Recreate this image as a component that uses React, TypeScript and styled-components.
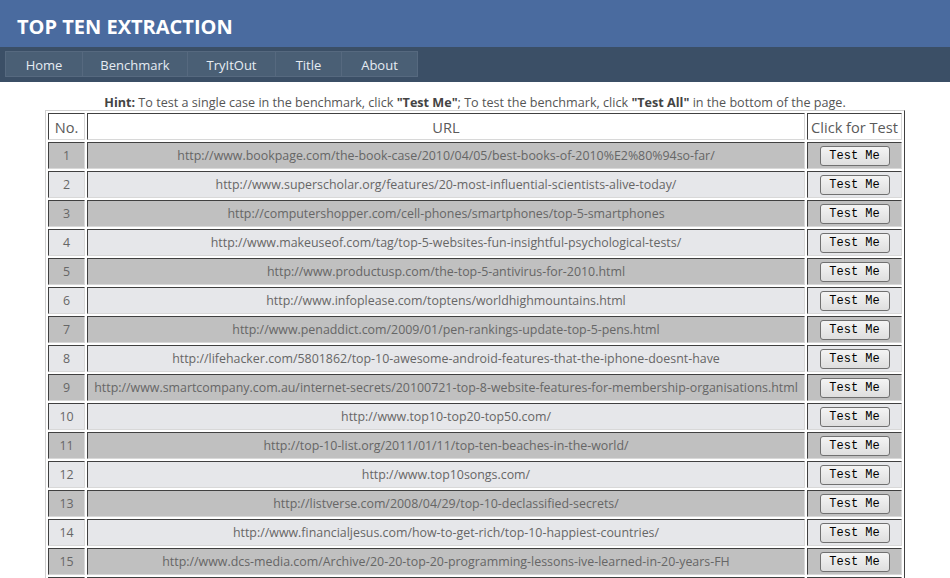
import React from 'react';
import styled, { createGlobalStyle } from 'styled-components';

const urls = [
  'http://www.bookpage.com/the-book-case/2010/04/05/best-books-of-2010%E2%80%94so-far/',
  'http://www.superscholar.org/features/20-most-influential-scientists-alive-today/',
  'http://computershopper.com/cell-phones/smartphones/top-5-smartphones',
  'http://www.makeuseof.com/tag/top-5-websites-fun-insightful-psychological-tests/',
  'http://www.productusp.com/the-top-5-antivirus-for-2010.html',
  'http://www.infoplease.com/toptens/worldhighmountains.html',
  'http://www.penaddict.com/2009/01/pen-rankings-update-top-5-pens.html',
  'http://lifehacker.com/5801862/top-10-awesome-android-features-that-the-iphone-doesnt-have',
  'http://www.smartcompany.com.au/internet-secrets/20100721-top-8-website-features-for-membership-organisations.html',
  'http://www.top10-top20-top50.com/',
  'http://top-10-list.org/2011/01/11/top-ten-beaches-in-the-world/',
  'http://www.top10songs.com/',
  'http://listverse.com/2008/04/29/top-10-declassified-secrets/',
  'http://www.financialjesus.com/how-to-get-rich/top-10-happiest-countries/',
  'http://www.dcs-media.com/Archive/20-20-top-20-programming-lessons-ive-learned-in-20-years-FH',
  'http://www.ted.com/index.php/talks',
];

const navItems = ['Home', 'Benchmark', 'TryItOut', 'Title', 'About'];

const GlobalStyle = createGlobalStyle`
  body {
    margin: 0;
    background: #ffffff;
    font-family: "Open Sans", "Noto Sans", sans-serif;
    color: #555;
  }
`;

export default function App() {
  return (
    <Page>
      <GlobalStyle />
      <Banner>
        <Logo>TOP TEN EXTRACTION</Logo>
      </Banner>
      <NavBar>
        <NavList>
          {navItems.map((item) => (
            <NavItem key={item}>{item}</NavItem>
          ))}
        </NavList>
      </NavBar>
      <Hint>
        <b>Hint:</b> To test a single case in the benchmark, click <b>"Test Me"</b>; To test the benchmark, click{' '}
        <b>"Test All"</b> in the bottom of the page.
      </Hint>
      <Table>
        <thead>
          <tr>
            <HeadCell $width={35}>No.</HeadCell>
            <HeadCell>URL</HeadCell>
            <HeadCell $width={93}>Click for Test</HeadCell>
          </tr>
        </thead>
        <tbody>
          {urls.map((url, i) => (
            <tr key={url}>
              <Cell $odd={i % 2 === 0}>{i + 1}</Cell>
              <Cell $odd={i % 2 === 0}>{url}</Cell>
              <Cell $odd={i % 2 === 0}>
                <TestButton>Test Me</TestButton>
              </Cell>
            </tr>
          ))}
        </tbody>
      </Table>
    </Page>
  );
}

const Page = styled.div`
  width: 950px;
  min-height: 578px;
`;

const Banner = styled.header`
  height: 47px;
  box-sizing: border-box;
  background: #4a6b9f;
  display: flex;
  align-items: center;
  padding: 5px 0 0 17px;
`;

const Logo = styled.h1`
  margin: 0;
  font-size: 20px;
  font-weight: 700;
  color: #ffffff;
`;

const NavBar = styled.nav`
  height: 35px;
  background: #3b4f66;
  padding: 4px 5px 0;
  box-sizing: border-box;
`;

const NavList = styled.ul`
  display: flex;
  margin: 0;
  padding: 0;
  list-style: none;
`;

const NavItem = styled.li`
  height: 26px;
  box-sizing: border-box;
  padding: 0;
  text-align: center;
  background: #4a5f75;
  border: 1px solid #56697f;
  margin-right: -1px;
  color: #e6ecf3;
  font-size: 13px;
  line-height: 26px;
  &:nth-child(1) { width: 78px; }
  &:nth-child(2) { width: 106px; }
  &:nth-child(3) { width: 89px; }
  &:nth-child(4) { width: 67px; }
  &:nth-child(5) { width: 77px; }
`;

const Hint = styled.p`
  margin: 0;
  padding-top: 14px;
  text-align: center;
  font-size: 12.6px;
  line-height: 14px;
  color: #555;
  b {
    color: #444;
  }
`;

const Table = styled.table`
  width: 860px;
  margin: 0 auto;
  border-collapse: separate;
  border-spacing: 2px;
  border: 1px solid;
  border-color: #d0d0d0 #404040 #404040 #d0d0d0;
`;

const HeadCell = styled.th<{ $width?: number }>`
  width: ${(p) => (p.$width ? `${p.$width}px` : 'auto')};
  height: 25px;
  padding: 0;
  font-weight: 400;
  font-size: 14.6px;
  color: #5a5a5a;
  background: #ffffff;
  border: 1px solid;
  border-color: #404040 #d8d8d8 #d8d8d8 #404040;
  white-space: nowrap;
`;

const Cell = styled.td<{ $odd: boolean }>`
  height: 25px;
  padding: 0;
  text-align: center;
  font-size: 12.4px;
  color: #666;
  background: ${(p) => (p.$odd ? '#c0c0c0' : '#e6e7ea')};
  border: 1px solid;
  border-color: #404040 #d8d8d8 #d8d8d8 #404040;
  white-space: nowrap;
`;

const TestButton = styled.button`
  width: 70px;
  height: 20px;
  padding: 0;
  font-family: "Liberation Mono", "DejaVu Sans Mono", monospace;
  font-size: 12px;
  color: #000;
  background: linear-gradient(#f4f4f4, #dedede);
  border: 1px solid #707070;
  border-radius: 3px;
  vertical-align: middle;
`;
